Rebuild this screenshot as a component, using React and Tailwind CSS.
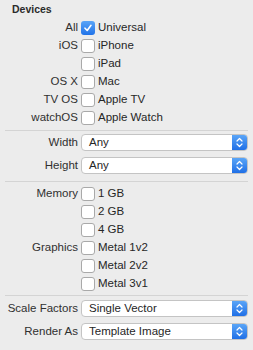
import React from "react";

function Check({ checked }) {
  if (checked) {
    return (
      <span className="flex h-[14px] w-[14px] items-center justify-center rounded-[3px] bg-gradient-to-b from-[#5aa5f7] to-[#1f72e8]">
        <svg width="10" height="10" viewBox="0 0 10 10">
          <path d="M2 5.2 L4.2 7.5 L8 2.3" fill="none" stroke="white" strokeWidth="1.6" strokeLinecap="round" strokeLinejoin="round" />
        </svg>
      </span>
    );
  }
  return <span className="h-[14px] w-[14px] rounded-[3px] border border-[#a9a9a9] bg-white" />;
}

function CheckRow({ label, text, checked }) {
  return (
    <div className="flex h-[18px] items-center">
      <div className="w-[77px] pr-[3px] text-right text-[#303030]">{label}</div>
      <Check checked={checked} />
      <div className="pl-[3px] text-[#262626]">{text}</div>
    </div>
  );
}

function Select({ label, value }) {
  return (
    <div className="flex h-[23px] items-center">
      <div className="w-[77px] pr-[3px] text-right text-[#303030]">{label}</div>
      <div className="flex h-[17px] flex-1 items-stretch overflow-hidden rounded-[4px] border border-[#c4c4c4] bg-white">
        <div className="flex-1 pl-[7px] leading-[15px] text-[#262626]">{value}</div>
        <div className="flex w-[15px] items-center justify-center bg-gradient-to-b from-[#5aa5f7] to-[#1f6fe6]">
          <svg width="7" height="11" viewBox="0 0 7 11">
            <path d="M1 4 L3.5 1.5 L6 4 M1 7 L3.5 9.5 L6 7" fill="none" stroke="white" strokeWidth="1.2" strokeLinecap="round" strokeLinejoin="round" />
          </svg>
        </div>
      </div>
    </div>
  );
}

export default function App() {
  return (
    <div className="h-[350px] w-[253px] bg-[#ececec] pl-[4px] pr-[5px] pt-[1px] text-[11.5px] font-['Liberation_Sans',Arial,sans-serif]">
      <div className="h-[18px] pl-[8px] pb-[2px] text-[10.5px] leading-[16px] font-bold text-[#2b2b2b]">Devices</div>
      <CheckRow label="All" text="Universal" checked />
      <CheckRow label="iOS" text="iPhone" />
      <CheckRow label="" text="iPad" />
      <CheckRow label="OS X" text="Mac" />
      <CheckRow label="TV OS" text="Apple TV" />
      <CheckRow label="watchOS" text="Apple Watch" />
      <div className="ml-[1px] mt-[3px] h-px bg-[#d4d4d4]" />
      <Select label="Width" value="Any" />
      <Select label="Height" value="Any" />
      <div className="ml-[1px] mt-[4px] mb-[3px] h-px bg-[#d4d4d4]" />
      <CheckRow label="Memory" text="1 GB" />
      <CheckRow label="" text="2 GB" />
      <CheckRow label="" text="4 GB" />
      <CheckRow label="Graphics" text="Metal 1v2" />
      <CheckRow label="" text="Metal 2v2" />
      <CheckRow label="" text="Metal 3v1" />
      <div className="ml-[1px] mt-[2px] mb-[1px] h-px bg-[#d4d4d4]" />
      <Select label="Scale Factors" value="Single Vector" />
      <Select label="Render As" value="Template Image" />
    </div>
  );
}
